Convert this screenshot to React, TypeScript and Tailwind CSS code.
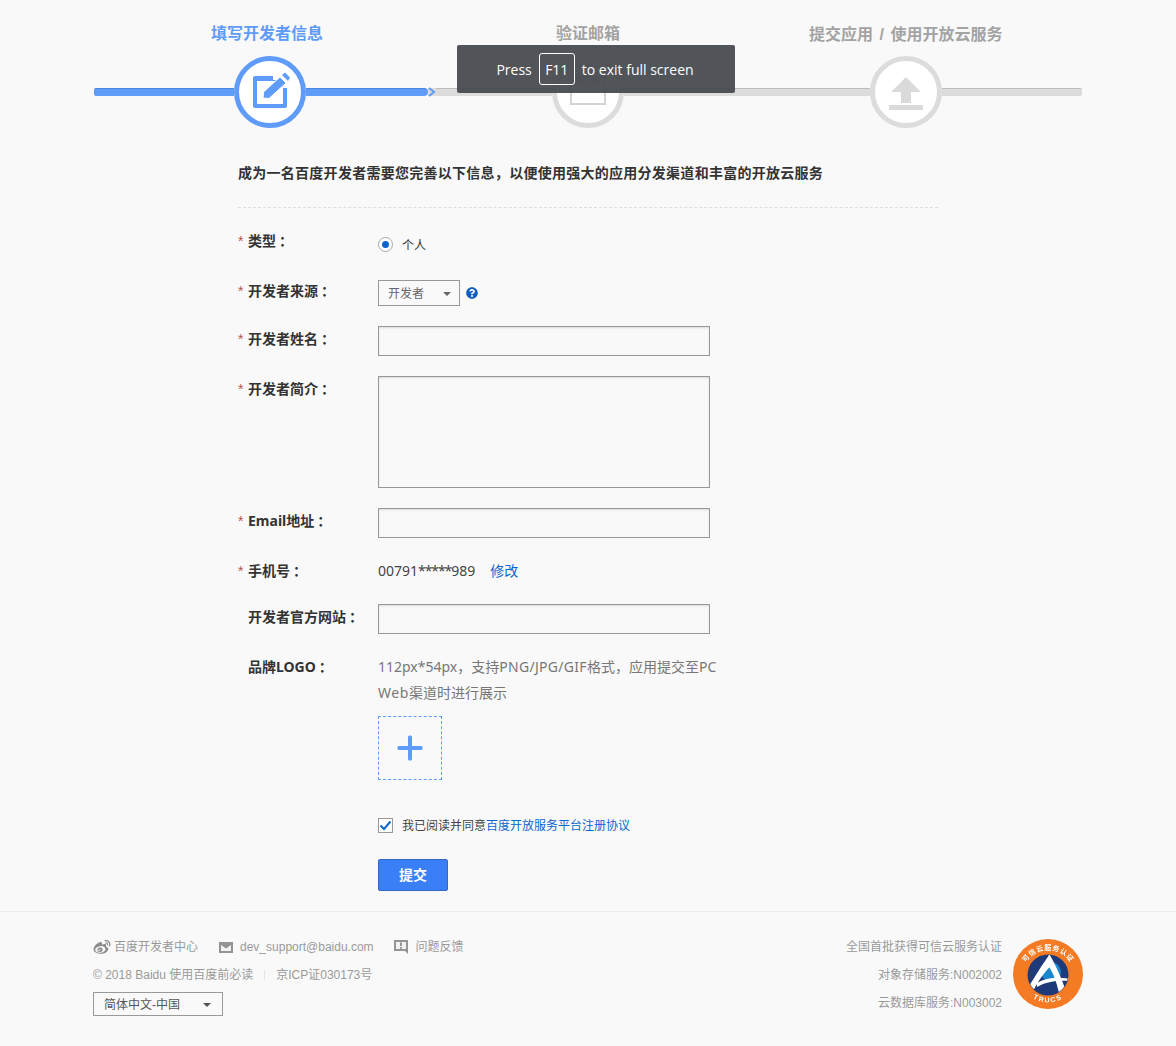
import React from "react";
import { FaWeibo, FaQuestionCircle } from "react-icons/fa";

const font = { fontFamily: '"Liberation Sans","Noto Sans CJK SC",sans-serif' };
const formFont = { fontFamily: '"Noto Sans","Noto Sans CJK SC",sans-serif' };

function Ring({ on, children }: { on?: boolean; children: React.ReactNode }) {
  return (
    <div className={`flex h-[72px] w-[72px] shrink-0 items-center justify-center rounded-full border-[5px] bg-white ${on ? "border-[#5f9bf8]" : "border-[#dcdcdc]"}`}>
      {children}
    </div>
  );
}

function Seg({ on, w, cap }: { on?: boolean; w: string; cap?: string }) {
  return <div className={`h-2 ${w} ${cap ?? ""} border-t ${on ? "border-[#4a86e4] bg-[#5f9bf8]" : "border-[#bdbdbd] bg-[#dcdcdc]"}`} />;
}

function Label({ text, star = true, pt }: { text: string; star?: boolean; pt: string }) {
  return (
    <div className={`flex w-[140px] shrink-0 text-[14px] leading-5 font-bold text-[#333] ${pt}`}>
      <span style={font} className="w-[10px] font-normal text-[#b5574a]">{star ? "*" : ""}</span>
      <span>
        {text}
        <span className="ml-[3px]">：</span>
      </span>
    </div>
  );
}

const inputCls = "h-[30px] w-[332px] border border-[#999] bg-[#f9f9f9] shadow-[inset_0_1px_2px_rgba(0,0,0,0.12)]";

export default function App() {
  return (
    <div style={font} className="min-h-[1046px] bg-[#f9f9f9] text-[#333]">
      <div className="h-[911px]">
        {/* step titles */}
        <div className="flex h-[45px] pt-[23px] text-[16px] leading-[22px] font-bold text-[#a3a3a3]">
          <span className="ml-[211px] text-[#5f9bf8]">填写开发者信息</span>
          <span className="ml-[233px]">验证邮箱</span>
          <span className="mt-[1px] ml-[189px]">
            提交应用 <span className="mx-[2px]">/</span> 使用开放云服务
          </span>
        </div>

        {/* step line */}
        <div className="mt-[11px] flex items-center pl-[94px]">
          <Seg on w="w-[140px]" cap="rounded-l-[2px]" />
          <Ring on>
            <svg width="42" height="42" viewBox="0 0 42 42">
              <rect x="4" y="5" width="34" height="32" rx="2" fill="#5f9bf8" />
              <rect x="8" y="10" width="26" height="23" fill="#fff" />
              <path d="M24 4h15v13h-5V9H24z" fill="#fff" />
              <path d="M14 27l.5-6L31 6l6 6-17 15.500z" fill="#5f9bf8" stroke="#fff" strokeWidth="1" />
              <path d="M33 4l3-2.500 5 5-2 3.500z" fill="#5f9bf8" />
            </svg>
          </Ring>
          <Seg on w="w-[122px]" cap="rounded-r-[4px]" />
          <svg width="8" height="10" viewBox="0 0 8 10" className="shrink-0">
            <rect x="0" y="1" width="8" height="8" fill="#dcdcdc" />
            <path d="M1 1l5 4-5 4" fill="none" stroke="#5f9bf8" strokeWidth="2" />
          </svg>
          <Seg w="w-[116px]" />
          <Ring>
            <svg width="36" height="29" viewBox="0 0 36 29" className="-mt-[3px]">
              <path d="M1 1h34v27H1z" fill="#fff" stroke="#d4d4d4" strokeWidth="2" />
              <path d="M1 1h34L18 13z" fill="#d4d4d4" />
            </svg>
          </Ring>
          <Seg w="w-[246px]" />
          <Ring>
            <svg width="36" height="36" viewBox="0 0 36 36" className="mt-[1px]">
              <path d="M18 2 33 17h-10v11h-10V17H3z" fill="#dadada" />
              <rect x="1" y="30" width="34" height="5" fill="#dadada" />
            </svg>
          </Ring>
          <Seg w="w-[140px]" cap="rounded-r-[2px]" />
        </div>

        {/* form */}
        <div style={formFont} className="ml-[238px] w-[700px]">
          <div className="mt-[34px] text-[14px] leading-[22px] font-bold tracking-[0.27px] text-[#333]">
            成为一名百度开发者需要您完善以下信息，以便使用强大的应用分发渠道和丰富的开放云服务
          </div>
          <div className="mt-[23px] border-t border-dashed border-[#dedede]" />

          <div className="mt-[23px] flex h-[49px]">
            <Label text="类型" pt="" />
            <div className="mt-[6px] flex h-[15px] items-center text-[12px]">
              <span className="flex h-[15px] w-[15px] items-center justify-center rounded-full border border-[#aaa] bg-white">
                <span className="h-[7px] w-[7px] rounded-full bg-[#0b66cf]" />
              </span>
              <span className="ml-[9px] mt-[2px]">个人</span>
            </div>
          </div>

          <div className="flex h-[46px]">
            <Label text="开发者来源" pt="pt-[1px]" />
            <div className="flex h-[26px] w-[82px] items-center justify-between border border-[#999] pt-[1px] pr-[8px] pl-[9px] text-[12px] text-[#666]">
              <span>开发者</span>
              <span className="border-x-[4px] border-t-[4px] border-x-transparent border-t-[#666]" />
            </div>
            <FaQuestionCircle className="mt-[7px] ml-[6px] h-[12px] w-[12px] text-[#0b5fc0]" />
          </div>

          <div className="flex h-[50px]">
            <Label text="开发者姓名" pt="pt-[3px]" />
            <div className={inputCls} />
          </div>

          <div className="flex h-[132px]">
            <Label text="开发者简介" pt="pt-[3px]" />
            <div className={`${inputCls} h-[112px]`} />
          </div>

          <div className="flex h-[53px]">
            <Label text="Email地址" pt="pt-[3px]" />
            <div className={inputCls} />
          </div>

          <div className="flex h-[43px] text-[14px] leading-5">
            <Label text="手机号" pt="" />
            <span className="text-[#444]">
              00791<span className="tracking-[-1.1px]">*****</span>989
            </span>
            <span className="ml-[15px] text-[#0b66cf]">修改</span>
          </div>

          <div className="flex h-[50px]">
            <Label text="开发者官方网站" star={false} pt="pt-[3px]" />
            <div className={inputCls} />
          </div>

          <div className="flex">
            <Label text="品牌LOGO" star={false} pt="pt-[3px]" />
            <div>
              <div className="w-[345px] text-[14px] leading-[26px] text-[#777]">
                112px*54px，支持<span className="tracking-[0.3px]">PNG/JPG/GIF</span>格式，应用提交至PC
                <br />
                <span className="tracking-[0.6px]">Web</span>渠道时进行展示
              </div>
              <div className="mt-[10px] flex h-[64px] w-[64px] items-center justify-center border border-dashed border-[#5f9bf8]">
                <svg width="26" height="26" viewBox="0 0 26 26">
                  <rect x="11" y="0.500" width="4" height="25" rx="1.500" fill="#5f9bf8" />
                  <rect x="0.500" y="11" width="25" height="4" rx="1.500" fill="#5f9bf8" />
                </svg>
              </div>
              <div className="mt-[37px] flex h-[16px] items-center text-[12px] text-[#444]">
                <span className="flex h-[15px] w-[15px] items-center justify-center border border-[#999] bg-white">
                  <svg width="13" height="11" viewBox="0 0 13 11">
                    <path d="M1.500 5.500 5 9l6.500-7.500" fill="none" stroke="#0b66cf" strokeWidth="2" />
                  </svg>
                </span>
                <span className="mt-[1px] ml-[9px]">我已阅读并同意</span>
                <span className="mt-[1px] text-[#0b66cf]">百度开放服务平台注册协议</span>
              </div>
              <button className="mt-[26px] flex h-[32px] w-[70px] items-center justify-center rounded-[2px] border border-[#3568c4] bg-[#3a7ff5] pb-[2px] text-[14px] font-bold text-white">
                提交
              </button>
            </div>
          </div>
        </div>
      </div>

      {/* footer */}
      <div className="flex h-[135px] justify-between border-t border-[#ececec] pt-[28px] pr-[93px] pl-[93px] text-[12px] text-[#999]">
        <div>
          <div className="flex h-[14px] items-center">
            <FaWeibo className="h-[17px] w-[18px] text-[#8c8c8c]" />
            <span className="ml-[3px]">百度开发者中心</span>
            <svg width="14" height="11" viewBox="0 0 14 11" className="ml-[21px]">
              <rect width="14" height="11" fill="#949494" />
              <path d="M2 3v6h10V3L7 6.500z" fill="#f2f2f2" />
            </svg>
            <span className="ml-[7px]">dev_support@baidu.com</span>
            <svg width="14" height="14" viewBox="0 0 14 14" className="ml-[20px]">
              <path d="M0 0h14v14l-3-3H0z" fill="#949494" />
              <path d="M2 2h10v7H2z" fill="#f2f2f2" />
              <rect x="6" y="2.500" width="2" height="3.500" fill="#949494" />
              <rect x="6" y="7" width="2" height="1.800" fill="#949494" />
            </svg>
            <span className="ml-[8px]">问题反馈</span>
          </div>
          <div className="mt-[14px] flex h-[14px] items-center">
            <span>© 2018 Baidu 使用百度前必读</span>
            <span className="mx-[11px] h-[10px] border-l border-[#e4e4e4]" />
            <span>京ICP证030173号</span>
          </div>
          <div className="mt-[10px] flex h-[24px] w-[130px] items-center justify-between border border-[#999] pt-[1px] pr-[11px] pl-[10px] text-[#555]">
            <span>简体中文-中国</span>
            <span className="border-x-[4px] border-t-[4px] border-x-transparent border-t-[#555]" />
          </div>
        </div>
        <div className="flex">
          <div className="-mt-[7px] text-right leading-[28px] text-[#999]">
            <div>全国首批获得可信云服务认证</div>
            <div>对象存储服务:N002002</div>
            <div>云数据库服务:N003002</div>
          </div>
          <svg width="70" height="70" viewBox="0 0 70 70" className="-mt-[1px] ml-[11px] blur-[0.4px]">
            <defs>
              <path id="top" d="M9 37a26 26 0 0 1 52 0" />
              <path id="bot" d="M7 42a29 29 0 0 0 56 0" />
              <clipPath id="inner"><circle cx="35" cy="36" r="20" /></clipPath>
            </defs>
            <circle cx="35" cy="35" r="35" fill="#f47a24" />
            <circle cx="35" cy="36" r="20.500" fill="#1f3a78" />
            <circle cx="38" cy="33" r="10" fill="#1b86cf" />
            <g clipPath="url(#inner)">
              <path d="M37 15C30 24 22 38 14 50l6 2C26 41 32 32 38 27z" fill="#fff" />
              <path d="M36 15c6 9 14 27 18 41l-7 2C44 45 41 34 34 25z" fill="#fff" />
              <path d="M24 44c10-6 22-6 34-4v2c-12-1-24 0-34 6z" fill="#fff" />
            </g>
            <text fontSize="7" fontWeight="700" fill="#fff" letterSpacing="0.6">
              <textPath href="#top" startOffset="50%" textAnchor="middle">可信云服务认证</textPath>
            </text>
            <text fontSize="7" fontWeight="700" fill="#fff" letterSpacing="1.500">
              <textPath href="#bot" startOffset="50%" textAnchor="middle">TRUCS</textPath>
            </text>
          </svg>
        </div>
      </div>

      {/* browser fullscreen notice */}
      <div style={{ fontFamily: '"Open Sans",sans-serif' }} className="absolute top-[45px] left-[457px] flex h-[48px] w-[278px] items-center justify-center rounded-[2px] bg-[#484b50]/95 pr-[2px] text-[14px] text-white">
        <span>Press</span>
        <span className="mx-[7px] flex h-[32px] w-[36px] items-center justify-center rounded-[3px] border border-white">F11</span>
        <span>to exit full screen</span>
      </div>
    </div>
  );
}
